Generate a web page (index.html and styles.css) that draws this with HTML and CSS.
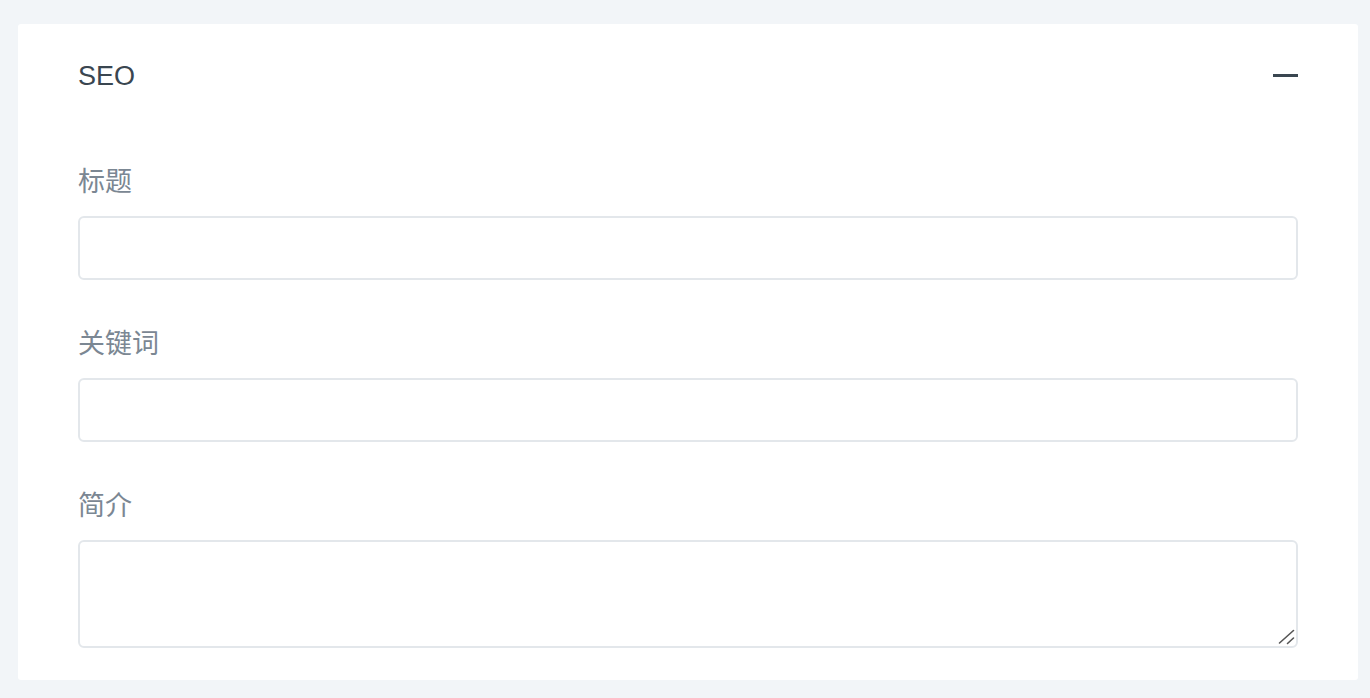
FILE: index.html
```html
<!DOCTYPE html>
<html lang="zh">
<head>
<meta charset="utf-8">
<link rel="stylesheet" href="styles.css">
</head>
<body>
<div class="page">
  <section class="card">
    <header class="card-header">
      <h2 class="card-title">SEO</h2>
      <button class="collapse" aria-label="collapse"><span class="minus"></span></button>
    </header>
    <div class="form">
      <div class="group">
        <label class="label">标题</label>
        <input class="input" type="text">
      </div>
      <div class="group">
        <label class="label">关键词</label>
        <input class="input" type="text">
      </div>
      <div class="group">
        <label class="label">简介</label>
        <div class="textarea-wrap">
          <textarea class="textarea"></textarea>
          <svg class="grip" width="18" height="18" viewBox="0 0 18 18" aria-hidden="true">
            <line x1="2.5" y1="16" x2="16.5" y2="3.5" stroke="#555" stroke-width="1.6" stroke-linecap="round"/>
            <line x1="10.5" y1="16.5" x2="16.5" y2="11" stroke="#555" stroke-width="1.6" stroke-linecap="round"/>
          </svg>
        </div>
      </div>
    </div>
  </section>
</div>
</body>
</html>
```
FILE: styles.css
```css
html, body {
  margin: 0;
  padding: 0;
  background: #f2f5f8;
  font-family: "Liberation Sans", "Noto Sans CJK SC", sans-serif;
}
.page {
  padding: 24px 12px 18px 18px;
}
.card {
  background: #ffffff;
  border-radius: 3px;
  padding: 30px 60px 32px;
}
.card-header {
  display: flex;
  align-items: center;
  justify-content: space-between;
  height: 44px;
}
.card-title {
  margin: 0;
  font-size: 27px;
  font-weight: 400;
  color: #3a4650;
  line-height: 44px;
}
.collapse {
  border: 0;
  background: none;
  padding: 0;
  width: 25px;
  height: 44px;
  display: flex;
  align-items: center;
}
.minus {
  display: block;
  width: 25px;
  height: 3px;
  background: #3a4650;
  margin-top: -2px;
}
.form {
  display: flex;
  flex-direction: column;
  margin-top: 20px;
}
.group {
  display: flex;
  flex-direction: column;
  margin-top: 45px;
}
.label {
  font-size: 27px;
  line-height: 34px;
  color: #7b8793;
  margin-bottom: 19px;
  font-family: "Noto Sans CJK SC", sans-serif;
}
.input, .textarea {
  box-sizing: border-box;
  width: 100%;
  border: 2px solid #e3e7eb;
  border-radius: 6px;
  background: #fff;
  margin: 0;
  font-size: 20px;
  font-family: inherit;
}
.input {
  height: 64px;
}
.textarea-wrap {
  position: relative;
}
.textarea {
  height: 108px;
  display: block;
  resize: none;
}
.grip {
  position: absolute;
  right: 3px;
  bottom: 3px;
  pointer-events: none;
}
```
